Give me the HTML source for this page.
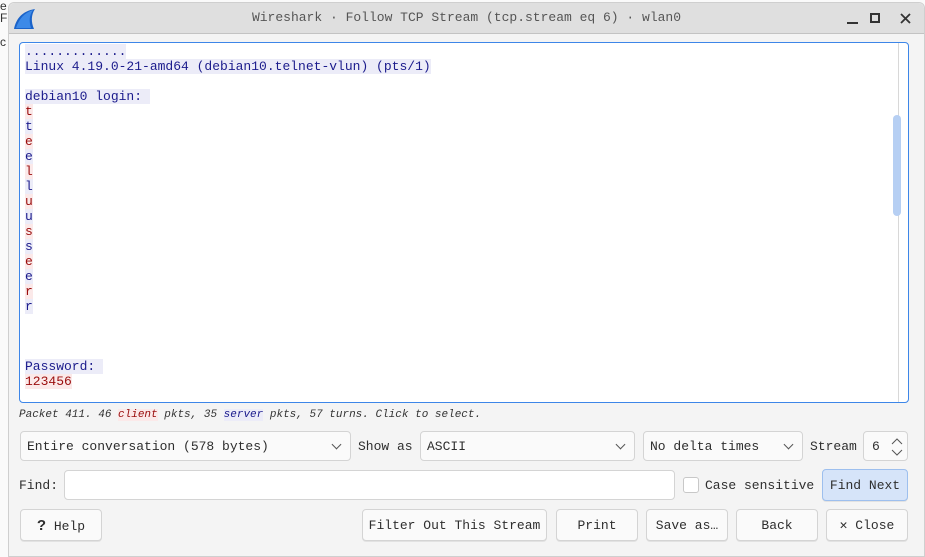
<!DOCTYPE html>
<html><head><style>
*{box-sizing:border-box;margin:0;padding:0}
body{width:925px;height:557px;background:#fafafa;position:relative;overflow:hidden;font-family:"Liberation Mono",monospace;font-size:13px;color:#2e2e2e}
.win{position:absolute;left:8px;top:2px;width:917px;height:555px;background:#f4f4f4;border:1px solid #cfcfcf;border-radius:6px 6px 0 0}
.title{position:absolute;left:0;top:0;width:100%;height:31px;background:#dfdfdf;border-bottom:1px solid #c3c3c3;border-radius:6px 6px 0 0}
.title .t{position:absolute;left:0;right:0;top:7px;text-align:center;color:#555;font-size:13px}
.ab{position:absolute}
.text{position:absolute;left:19px;top:42px;width:890px;height:361px;background:#fff;border:1px solid #3d86e8;border-radius:4px;overflow:hidden}
.lines{position:absolute;left:5px;top:1px;line-height:15px;font-size:13px}
.s{background:#ececf8;color:#1b1b8c}
.c{background:#fbe9e9;color:#9a0d0d}
.sb{position:absolute;right:9px;top:0;width:1px;height:100%;background:#d8d8d8}
.thumb{position:absolute;right:7px;top:72px;width:8px;height:101px;background:#b6cff3;border-radius:4px}
.btn{position:absolute;height:32px;background:#fafafa;border:1px solid #d4d4d4;border-radius:4px;text-align:center;line-height:31px;font-size:13px;color:#2e2e2e;box-shadow:0 1px 0 #e2e2e2}
.combo{position:absolute;height:30px;background:#fafafa;border:1px solid #d4d4d4;border-radius:4px;line-height:29px;padding-left:6px;font-size:13px}
.combo.d:after{content:"";position:absolute;right:10px;top:9px;width:6px;height:6px;border-right:1px solid #555;border-bottom:1px solid #555;transform:rotate(45deg)}
.lbl{position:absolute;font-size:13px}
</style></head><body>
<div class="ab" style="left:0;top:0;font-family:'Liberation Sans';font-size:12px;color:#333;line-height:12px">e<br>F<br><br>c</div>
<div class="win">
 <div class="title"><div class="t">Wireshark · Follow TCP Stream (tcp.stream eq 6) · wlan0</div>
  <svg class="ab" style="left:3px;top:3px" width="24" height="24" viewBox="0 0 24 24"><path d="M2 23 C4 13 10 5 23 3 C19 9 19 16 22 23 Z" fill="#1a63c9"/><path d="M4 22 C7 13 12 7 21 4 C17 10 17 15 19 22Z" fill="#3d8ae8"/></svg>
  <div class="ab" style="left:838px;top:19px;width:11px;height:2px;background:#333"></div>
  <div class="ab" style="left:861px;top:10px;width:10px;height:10px;border:2px solid #333"></div>
  <svg class="ab" style="left:891px;top:10px" width="11" height="11"><path d="M1 1L10 10M10 1L1 10" stroke="#333" stroke-width="1.8"/></svg>
 </div>
</div>
<div class="text">
 <div class="lines">
<span class="s">.............</span><br>
<span class="s">Linux 4.19.0-21-amd64 (debian10.telnet-vlun) (pts/1)</span><br>
<br>
<span class="s">debian10 login:&nbsp;</span><br>
<span class="c">t</span><br><span class="s">t</span><br><span class="c">e</span><br><span class="s">e</span><br><span class="c">l</span><br><span class="s">l</span><br><span class="c">u</span><br><span class="s">u</span><br><span class="c">s</span><br><span class="s">s</span><br><span class="c">e</span><br><span class="s">e</span><br><span class="c">r</span><br><span class="s">r</span><br>
<br><br><br>
<span class="s">Password:&nbsp;</span><br>
<span class="c">123456</span>
 </div>
 <div class="sb"></div><div class="thumb"></div>
</div>
<div class="lbl" style="left:19px;top:409px;font-size:11px;font-style:italic;color:#333">Packet 411. 46 <span class="c">client</span> pkts, 35 <span class="s">server</span> pkts, 57 turns. Click to select.</div>
<div class="combo d" style="left:20px;top:431px;width:331px">Entire conversation (578 bytes)</div>
<div class="lbl" style="left:358px;top:439px">Show as</div>
<div class="combo d" style="left:420px;top:431px;width:215px">ASCII</div>
<div class="combo d" style="left:643px;top:431px;width:160px">No delta times</div>
<div class="lbl" style="left:810px;top:439px">Stream</div>
<div class="combo" style="left:863px;top:431px;width:45px;padding-left:8px">6
 <svg class="ab" style="left:27px;top:5px" width="12" height="20"><path d="M1 7L6 2L11 7M1 13L6 18L11 13" fill="none" stroke="#555" stroke-width="1"/></svg></div>
<div class="lbl" style="left:19px;top:478px">Find:</div>
<div class="ab" style="left:64px;top:470px;width:611px;height:30px;background:#fff;border:1px solid #d4d4d4;border-radius:4px"></div>
<div class="ab" style="left:683px;top:477px;width:16px;height:16px;background:#fff;border:1px solid #c8c8c8;border-radius:3px"></div>
<div class="lbl" style="left:705px;top:478px">Case sensitive</div>
<div class="btn" style="left:822px;top:469px;width:86px;background:#d6e4f9;border-color:#9dbfee">Find Next</div>
<div class="btn" style="left:20px;top:509px;width:82px"><b style="font-family:'Liberation Sans';font-size:15px">?</b> Help</div>
<div class="btn" style="left:362px;top:509px;width:185px">Filter Out This Stream</div>
<div class="btn" style="left:556px;top:509px;width:82px">Print</div>
<div class="btn" style="left:646px;top:509px;width:82px">Save as…</div>
<div class="btn" style="left:736px;top:509px;width:82px">Back</div>
<div class="btn" style="left:826px;top:509px;width:82px"><b>✕</b> Close</div>
</body></html>
